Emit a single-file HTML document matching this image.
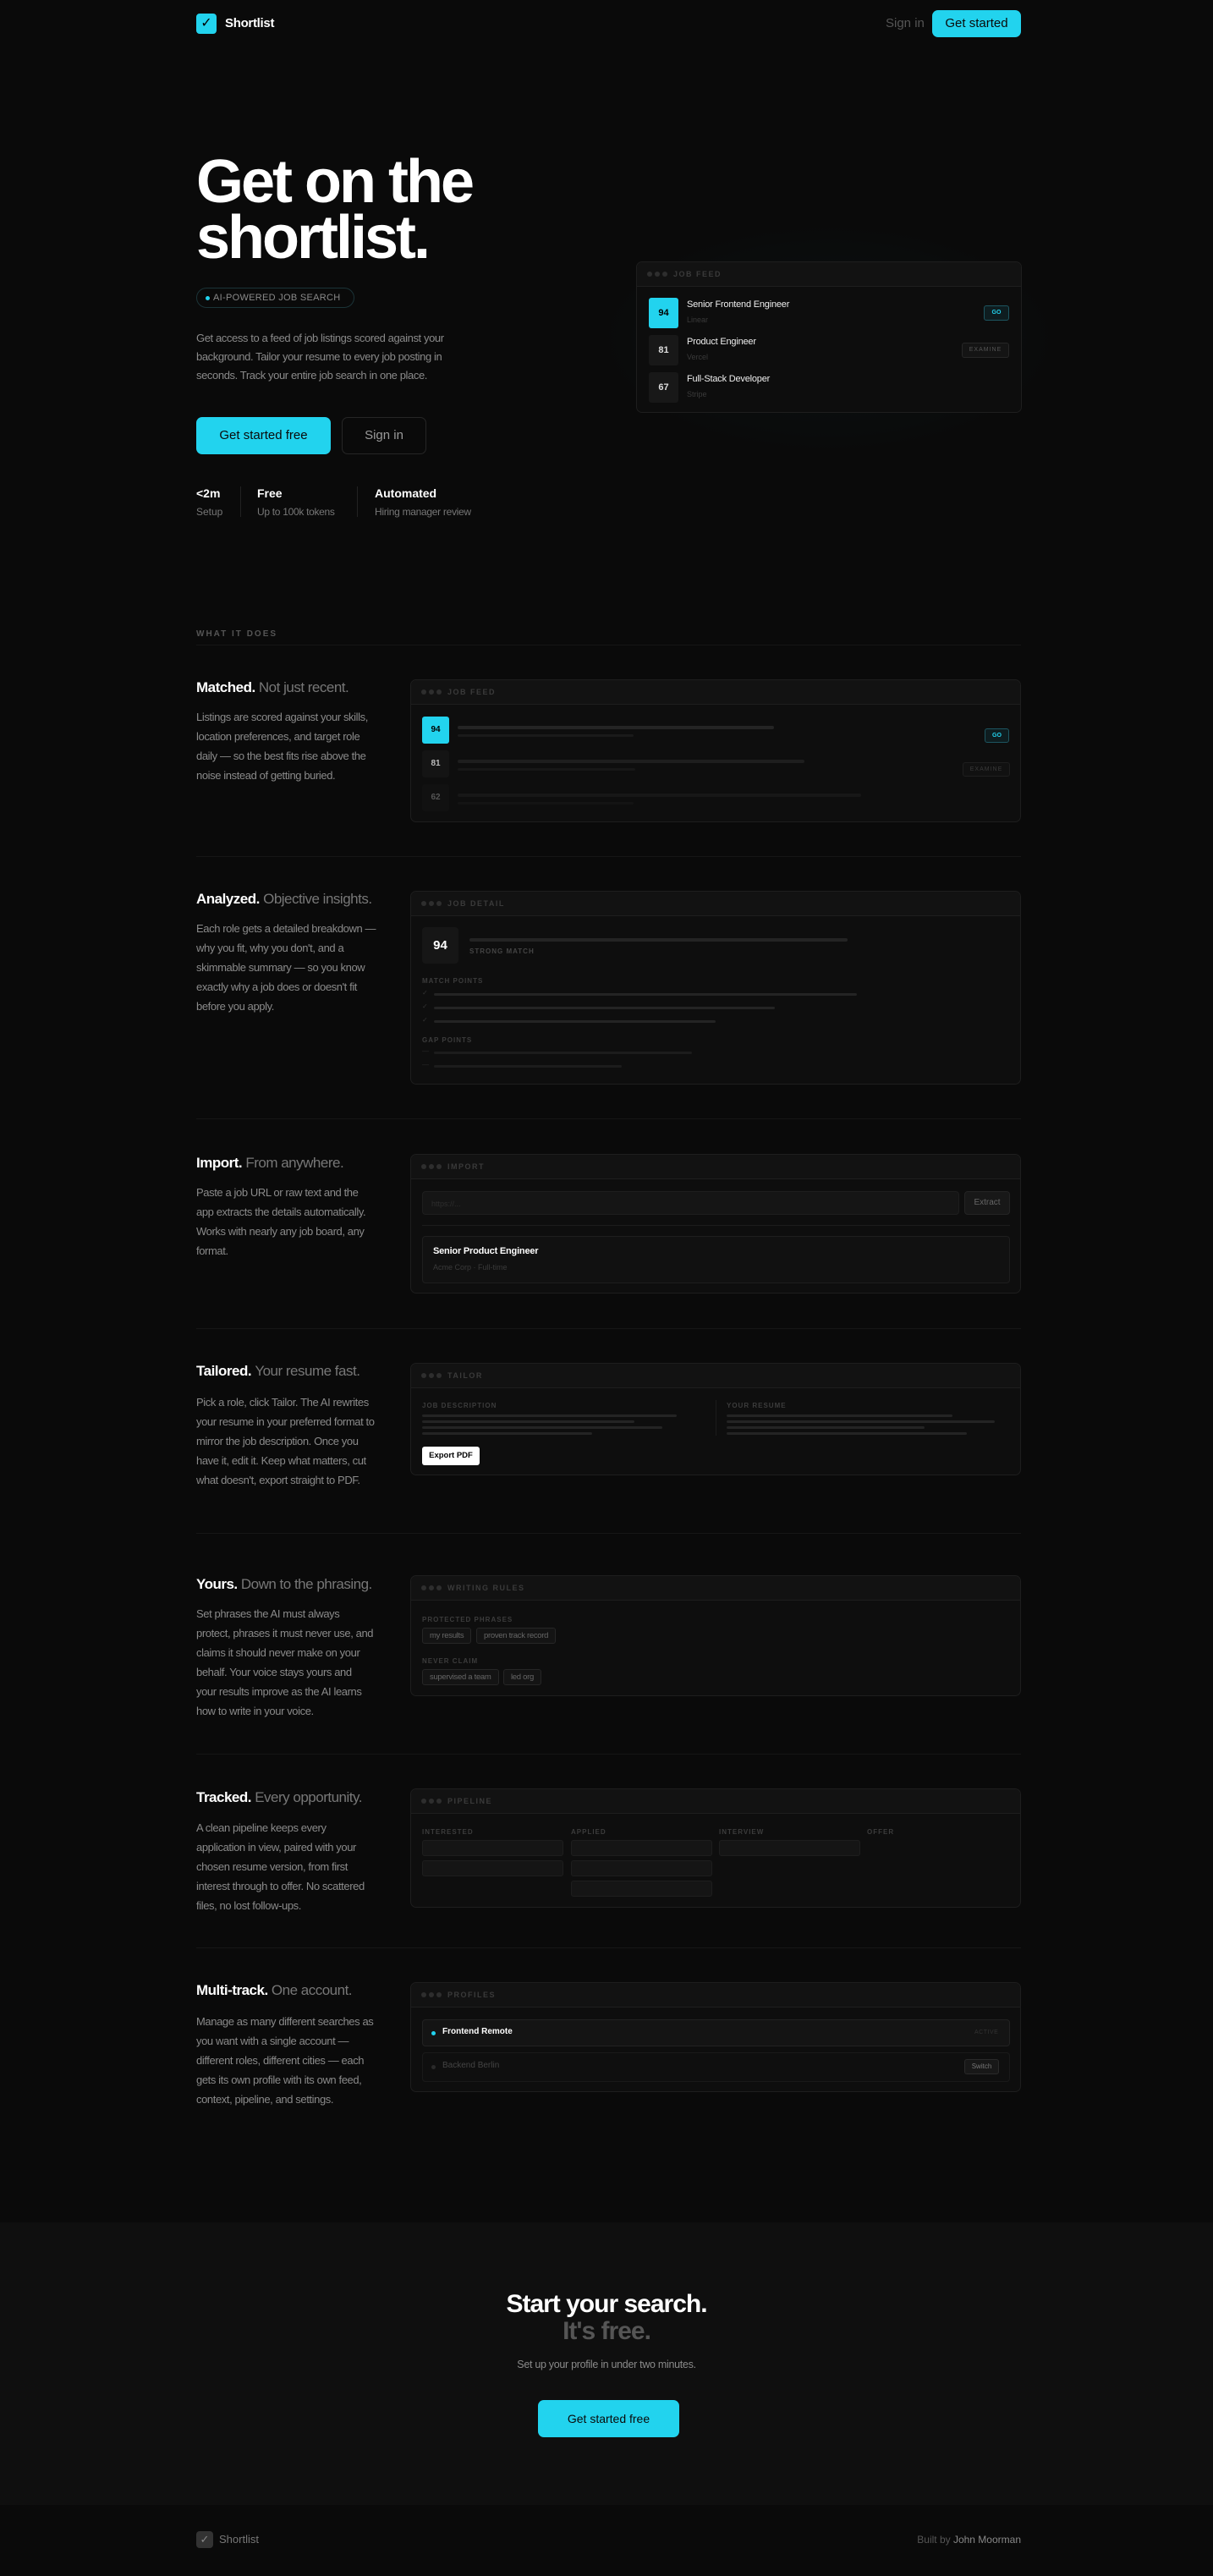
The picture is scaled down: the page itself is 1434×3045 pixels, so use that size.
<!DOCTYPE html>
<html><head><meta charset="utf-8"><style>
*{box-sizing:border-box;margin:0;padding:0}
body{width:1434px;height:3045px;background:#0a0a0a;font-family:"Liberation Sans",sans-serif;color:#8a8a8a;position:relative;overflow:hidden}
.a{position:absolute}
.logo{width:24px;height:24px;border-radius:4px;background:#22d3ee;color:#000;font-size:16px;line-height:24px;text-align:center}
.btn{background:#22d3ee;color:#0a0a0a;border-radius:7px;text-align:center;font-size:14px}
.card{position:absolute;left:485px;width:722px;background:#0e0e0e;border:1px solid #1e1e1e;border-radius:7px;overflow:hidden}
.ch{height:29px;border-bottom:1px solid #1e1e1e;background:#121212;display:flex;align-items:center;padding-left:12px;font-size:9px;letter-spacing:1.5px;color:#3a3a3a;font-weight:bold}
.dots{display:inline-flex;gap:3px;margin-right:7px}.dots i{width:6px;height:6px;border-radius:50%;background:#2e2e2e;display:block}
.h3{font-size:17px;font-weight:bold;color:#fff;letter-spacing:-.5px}.h3 span{font-weight:normal;color:#777}
.p{font-size:13px;line-height:23px;color:#8a8a8a;width:216px;letter-spacing:-.4px}
.bar{position:absolute;height:4px;background:#242424;border-radius:2px}
.lab{position:absolute;font-size:8px;letter-spacing:1px;color:#3c3c3c;font-weight:bold}
.sep{position:absolute;left:232px;width:975px;height:1px;background:#161616}
.chip{position:absolute;height:19px;border:1px solid #262626;background:#141414;border-radius:3px;font-size:9.5px;color:#666;line-height:17px;padding:0 8px;letter-spacing:-.3px}
.pc{position:absolute;width:167px;height:19px;background:#151515;border:1px solid #1e1e1e;border-radius:3px}
</style></head><body>
<!-- header -->
<div class="a logo" style="left:232px;top:16px">✓</div>
<div class="a" style="left:266px;top:19px;font-size:15px;color:#fff;font-weight:bold;letter-spacing:-.3px">Shortlist</div>
<div class="a" style="left:1047px;top:19px;font-size:15px;color:#555">Sign in</div>
<div class="a btn" style="left:1102px;top:12px;width:105px;height:32px;line-height:32px;font-size:15px">Get started</div>

<!-- hero -->
<div class="a" style="left:232px;top:182px;font-size:72px;line-height:66px;font-weight:bold;color:#fff;letter-spacing:-3px">Get on the<br>shortlist.</div>
<div class="a" style="left:232px;top:340px;width:187px;height:24px;border:1px solid #1b3438;border-radius:12px;font-size:11px;line-height:22px;color:#8a8a8a;padding-left:19px;letter-spacing:.3px">AI-POWERED JOB SEARCH<i style="position:absolute;left:10px;top:9px;width:5px;height:5px;border-radius:50%;background:#22d3ee"></i></div>
<div class="a" style="left:232px;top:389px;width:335px;font-size:13px;line-height:22px;color:#8a8a8a;letter-spacing:-.4px">Get access to a feed of job listings scored against your background. Tailor your resume to every job posting in seconds. Track your entire job search in one place.</div>
<div class="a btn" style="left:232px;top:493px;width:159px;height:44px;line-height:44px;font-size:15px">Get started free</div>
<div class="a" style="left:404px;top:493px;width:100px;height:44px;line-height:42px;border:1px solid #262626;border-radius:7px;text-align:center;color:#9a9a9a;font-size:15px">Sign in</div>
<div class="a" style="left:232px;top:575px;font-size:14px;font-weight:bold;color:#fff">&lt;2m</div>
<div class="a" style="left:232px;top:598px;font-size:12px;color:#777">Setup</div>
<div class="a" style="left:284px;top:575px;width:1px;height:36px;background:#222"></div>
<div class="a" style="left:304px;top:575px;font-size:14px;font-weight:bold;color:#fff">Free</div>
<div class="a" style="left:304px;top:598px;font-size:12px;color:#777;letter-spacing:-.3px">Up to 100k tokens</div>
<div class="a" style="left:422px;top:575px;width:1px;height:36px;background:#222"></div>
<div class="a" style="left:443px;top:575px;font-size:14px;font-weight:bold;color:#fff">Automated</div>
<div class="a" style="left:443px;top:598px;font-size:12px;color:#777;letter-spacing:-.3px">Hiring manager review</div>

<div class="a" style="left:700px;top:260px;width:560px;height:280px;background:radial-gradient(ellipse at center,rgba(34,211,238,.04),transparent 70%)"></div>
<div class="card" style="left:752px;top:309px;width:456px;height:179px;background:#0d0d0d">
 <div class="ch"><span class="dots"><i></i><i></i><i></i></span>JOB FEED</div>
 <div class="a" style="left:14px;top:42px;width:35px;height:36px;background:#22d3ee;border-radius:3px;color:#000;font-size:11px;font-weight:bold;text-align:center;line-height:36px">94</div>
 <div class="a" style="left:59px;top:44px;font-size:11px;color:#eee;letter-spacing:-.2px">Senior Frontend Engineer</div>
 <div class="a" style="left:59px;top:63px;font-size:9px;color:#3a3a3a">Linear</div>
 <div class="a" style="left:410px;top:51px;width:30px;height:18px;border:1px solid #1d5560;background:#0e1d20;border-radius:3px;font-size:7px;color:#22d3ee;text-align:center;line-height:16px;font-weight:bold">GO</div>
 <div class="a" style="left:14px;top:86px;width:35px;height:36px;background:#181818;border-radius:3px;color:#ddd;font-size:11px;font-weight:bold;text-align:center;line-height:36px">81</div>
 <div class="a" style="left:59px;top:88px;font-size:11px;color:#eee;letter-spacing:-.2px">Product Engineer</div>
 <div class="a" style="left:59px;top:107px;font-size:9px;color:#3a3a3a">Vercel</div>
 <div class="a" style="left:384px;top:95px;width:56px;height:18px;border:1px solid #262626;background:#141414;border-radius:3px;font-size:7px;color:#555;text-align:center;line-height:16px;letter-spacing:1px">EXAMINE</div>
 <div class="a" style="left:14px;top:130px;width:35px;height:36px;background:#181818;border-radius:3px;color:#ddd;font-size:11px;font-weight:bold;text-align:center;line-height:36px">67</div>
 <div class="a" style="left:59px;top:132px;font-size:11px;color:#eee;letter-spacing:-.2px">Full-Stack Developer</div>
 <div class="a" style="left:59px;top:151px;font-size:9px;color:#3a3a3a">Stripe</div>
</div>

<!-- what it does -->
<div class="a" style="left:232px;top:744px;font-size:10px;letter-spacing:2px;color:#555;font-weight:bold">WHAT IT DOES</div>
<div class="sep" style="top:762px"></div>

<!-- Matched -->
<div class="a h3" style="left:232px;top:803px">Matched. <span>Not just recent.</span></div>
<div class="a p" style="left:232px;top:836px">Listings are scored against your skills, location preferences, and target role daily — so the best fits rise above the noise instead of getting buried.</div>
<div class="card" style="top:803px;height:169px">
 <div class="ch"><span class="dots"><i></i><i></i><i></i></span>JOB FEED</div>
 <div class="a" style="left:13px;top:43px;width:32px;height:32px;background:#22d3ee;border-radius:3px;color:#000;font-size:10px;font-weight:bold;text-align:center;line-height:32px">94</div>
 <div class="bar" style="left:55px;top:54px;width:374px"></div><div class="bar" style="left:55px;top:64px;width:208px;height:3px;background:#1a1a1a"></div>
 <div class="a" style="left:678px;top:57px;width:29px;height:17px;border:1px solid #1d5560;background:#0e1d20;border-radius:3px;font-size:7px;color:#22d3ee;text-align:center;line-height:15px;font-weight:bold">GO</div>
 <div class="a" style="left:13px;top:83px;width:32px;height:32px;background:#141414;border-radius:3px;color:#bbb;font-size:10px;font-weight:bold;text-align:center;line-height:32px">81</div>
 <div class="bar" style="left:55px;top:94px;width:410px;background:#1e1e1e"></div><div class="bar" style="left:55px;top:104px;width:210px;height:3px;background:#171717"></div>
 <div class="a" style="left:652px;top:97px;width:56px;height:17px;border:1px solid #1e1e1e;background:#111;border-radius:3px;font-size:7px;color:#3a3a3a;text-align:center;line-height:15px;letter-spacing:1px">EXAMINE</div>
 <div class="a" style="left:13px;top:123px;width:32px;height:32px;background:#111;border-radius:3px;color:#555;font-size:10px;font-weight:bold;text-align:center;line-height:32px">62</div>
 <div class="bar" style="left:55px;top:134px;width:477px;background:#171717"></div><div class="bar" style="left:55px;top:144px;width:208px;height:3px;background:#141414"></div>
</div>
<div class="sep" style="top:1012px"></div>

<!-- Analyzed -->
<div class="a h3" style="left:232px;top:1053px">Analyzed. <span>Objective insights.</span></div>
<div class="a p" style="left:232px;top:1086px">Each role gets a detailed breakdown — why you fit, why you don't, and a skimmable summary — so you know exactly why a job does or doesn't fit before you apply.</div>
<div class="card" style="top:1053px;height:229px">
 <div class="ch"><span class="dots"><i></i><i></i><i></i></span>JOB DETAIL</div>
 <div class="a" style="left:13px;top:42px;width:43px;height:43px;background:#161616;border-radius:4px;color:#fff;font-size:15px;font-weight:bold;text-align:center;line-height:43px">94</div>
 <div class="bar" style="left:69px;top:55px;width:447px"></div>
 <div class="lab" style="left:69px;top:66px;color:#444">STRONG MATCH</div>
 <div class="lab" style="left:13px;top:101px">MATCH POINTS</div>
 <div class="a" style="left:13px;top:115px;font-size:8px;color:#333">✓</div><div class="bar" style="left:27px;top:120px;width:500px;height:3px"></div>
 <div class="a" style="left:13px;top:131px;font-size:8px;color:#333">✓</div><div class="bar" style="left:27px;top:136px;width:403px;height:3px"></div>
 <div class="a" style="left:13px;top:147px;font-size:8px;color:#333">✓</div><div class="bar" style="left:27px;top:152px;width:333px;height:3px"></div>
 <div class="lab" style="left:13px;top:171px">GAP POINTS</div>
 <div class="a" style="left:13px;top:184px;font-size:8px;color:#2a2a2a">—</div><div class="bar" style="left:27px;top:189px;width:305px;height:3px;background:#1c1c1c"></div>
 <div class="a" style="left:13px;top:200px;font-size:8px;color:#2a2a2a">—</div><div class="bar" style="left:27px;top:205px;width:222px;height:3px;background:#1c1c1c"></div>
</div>
<div class="sep" style="top:1322px"></div>

<!-- Import -->
<div class="a h3" style="left:232px;top:1365px">Import. <span>From anywhere.</span></div>
<div class="a p" style="left:232px;top:1398px;width:205px">Paste a job URL or raw text and the app extracts the details automatically. Works with nearly any job board, any format.</div>
<div class="card" style="top:1364px;height:165px">
 <div class="ch"><span class="dots"><i></i><i></i><i></i></span>IMPORT</div>
 <div class="a" style="left:13px;top:43px;width:635px;height:28px;background:#151515;border:1px solid #1e1e1e;border-radius:4px;font-size:9px;color:#2e2e2e;padding:9px 10px">https://...</div>
 <div class="a" style="left:654px;top:43px;width:54px;height:28px;background:#181818;border:1px solid #242424;border-radius:4px;font-size:10px;color:#666;text-align:center;line-height:26px">Extract</div>
 <div class="a" style="left:13px;top:83px;width:695px;height:1px;background:#1c1c1c"></div>
 <div class="a" style="left:13px;top:96px;width:695px;height:56px;background:#111;border:1px solid #1e1e1e;border-radius:4px"></div>
 <div class="a" style="left:26px;top:108px;font-size:11px;color:#fff;font-weight:bold;letter-spacing:-.2px">Senior Product Engineer</div>
 <div class="a" style="left:26px;top:128px;font-size:9px;color:#3a3a3a">Acme Corp · Full-time</div>
</div>
<div class="sep" style="top:1570px"></div>

<!-- Tailored -->
<div class="a h3" style="left:232px;top:1611px">Tailored. <span>Your resume fast.</span></div>
<div class="a p" style="left:232px;top:1646px">Pick a role, click Tailor. The AI rewrites your resume in your preferred format to mirror the job description. Once you have it, edit it. Keep what matters, cut what doesn't, export straight to PDF.</div>
<div class="card" style="top:1611px;height:133px">
 <div class="ch"><span class="dots"><i></i><i></i><i></i></span>TAILOR</div>
 <div class="lab" style="left:13px;top:45px">JOB DESCRIPTION</div>
 <div class="bar" style="left:13px;top:60px;width:301px;height:3px"></div><div class="bar" style="left:13px;top:67px;width:251px;height:3px"></div><div class="bar" style="left:13px;top:74px;width:284px;height:3px"></div><div class="bar" style="left:13px;top:81px;width:201px;height:3px"></div>
 <div class="a" style="left:360px;top:43px;width:1px;height:42px;background:#1c1c1c"></div>
 <div class="lab" style="left:373px;top:45px">YOUR RESUME</div>
 <div class="bar" style="left:373px;top:60px;width:267px;height:3px"></div><div class="bar" style="left:373px;top:67px;width:317px;height:3px"></div><div class="bar" style="left:373px;top:74px;width:234px;height:3px"></div><div class="bar" style="left:373px;top:81px;width:284px;height:3px"></div>
 <div class="a" style="left:13px;top:98px;width:68px;height:22px;background:#fff;border-radius:3px;font-size:9.5px;color:#000;text-align:center;line-height:22px;font-weight:bold">Export PDF</div>
</div>
<div class="sep" style="top:1812px"></div>

<!-- Yours -->
<div class="a h3" style="left:232px;top:1863px">Yours. <span>Down to the phrasing.</span></div>
<div class="a p" style="left:232px;top:1896px;width:210px">Set phrases the AI must always protect, phrases it must never use, and claims it should never make on your behalf. Your voice stays yours and your results improve as the AI learns how to write in your voice.</div>
<div class="card" style="top:1862px;height:143px">
 <div class="ch"><span class="dots"><i></i><i></i><i></i></span>WRITING RULES</div>
 <div class="lab" style="left:13px;top:47px">PROTECTED PHRASES</div>
 <div class="chip" style="left:13px;top:61px">my results</div><div class="chip" style="left:77px;top:61px">proven track record</div>
 <div class="lab" style="left:13px;top:96px">NEVER CLAIM</div>
 <div class="chip" style="left:13px;top:110px">supervised a team</div><div class="chip" style="left:109px;top:110px">led org</div>
</div>
<div class="sep" style="top:2073px"></div>

<!-- Tracked -->
<div class="a h3" style="left:232px;top:2115px">Tracked. <span>Every opportunity.</span></div>
<div class="a p" style="left:232px;top:2149px;width:210px">A clean pipeline keeps every application in view, paired with your chosen resume version, from first interest through to offer. No scattered files, no lost follow-ups.</div>
<div class="card" style="top:2114px;height:141px">
 <div class="ch"><span class="dots"><i></i><i></i><i></i></span>PIPELINE</div>
 <div class="lab" style="left:13px;top:46px">INTERESTED</div><div class="lab" style="left:189px;top:46px">APPLIED</div><div class="lab" style="left:364px;top:46px">INTERVIEW</div><div class="lab" style="left:539px;top:46px">OFFER</div>
 <div class="pc" style="left:13px;top:60px"></div><div class="pc" style="left:13px;top:84px"></div>
 <div class="pc" style="left:189px;top:60px"></div><div class="pc" style="left:189px;top:84px"></div><div class="pc" style="left:189px;top:108px"></div>
 <div class="pc" style="left:364px;top:60px"></div>
</div>
<div class="sep" style="top:2302px"></div>

<!-- Multi-track -->
<div class="a h3" style="left:232px;top:2343px">Multi-track. <span>One account.</span></div>
<div class="a p" style="left:232px;top:2378px">Manage as many different searches as you want with a single account — different roles, different cities — each gets its own profile with its own feed, context, pipeline, and settings.</div>
<div class="card" style="top:2343px;height:130px">
 <div class="ch"><span class="dots"><i></i><i></i><i></i></span>PROFILES</div>
 <div class="a" style="left:13px;top:43px;width:695px;height:32px;background:#141414;border:1px solid #222;border-radius:4px"></div>
 <div class="a" style="left:24px;top:57px;width:5px;height:5px;border-radius:50%;background:#22d3ee"></div>
 <div class="a" style="left:37px;top:52px;font-size:10px;color:#fff;font-weight:bold">Frontend Remote</div>
 <div class="a" style="left:666px;top:55px;font-size:7px;color:#333;letter-spacing:.5px">ACTIVE</div>
 <div class="a" style="left:13px;top:82px;width:695px;height:35px;background:#0f0f0f;border:1px solid #1a1a1a;border-radius:4px"></div>
 <div class="a" style="left:24px;top:97px;width:5px;height:5px;border-radius:50%;background:#2a2a2a"></div>
 <div class="a" style="left:37px;top:92px;font-size:10px;color:#444">Backend Berlin</div>
 <div class="a" style="left:654px;top:90px;width:41px;height:18px;background:#181818;border:1px solid #2a2a2a;border-radius:3px;font-size:8px;color:#777;text-align:center;line-height:16px">Switch</div>
</div>

<!-- CTA -->
<div class="a" style="left:0;top:2627px;width:1434px;height:334px;background:#0f0f0f"></div>
<div class="a" style="left:0;top:2708px;width:1434px;text-align:center;font-size:30px;line-height:32px;font-weight:bold;color:#fff;letter-spacing:-1px">Start your search.<br><span style="color:#555">It's free.</span></div>
<div class="a" style="left:0;top:2788px;width:1434px;text-align:center;font-size:12.5px;color:#8a8a8a;letter-spacing:-.3px">Set up your profile in under two minutes.</div>
<div class="a btn" style="left:636px;top:2837px;width:167px;height:44px;line-height:44px;font-size:14px">Get started free</div>

<!-- footer -->
<div class="a logo" style="left:232px;top:2992px;width:20px;height:20px;line-height:20px;font-size:13px;background:#333;color:#888">✓</div>
<div class="a" style="left:259px;top:2994px;font-size:13px;color:#777">Shortlist</div>
<div class="a" style="left:1000px;top:2995px;width:207px;text-align:right;font-size:12px;color:#555">Built by <span style="color:#888">John Moorman</span></div>
</body></html>
